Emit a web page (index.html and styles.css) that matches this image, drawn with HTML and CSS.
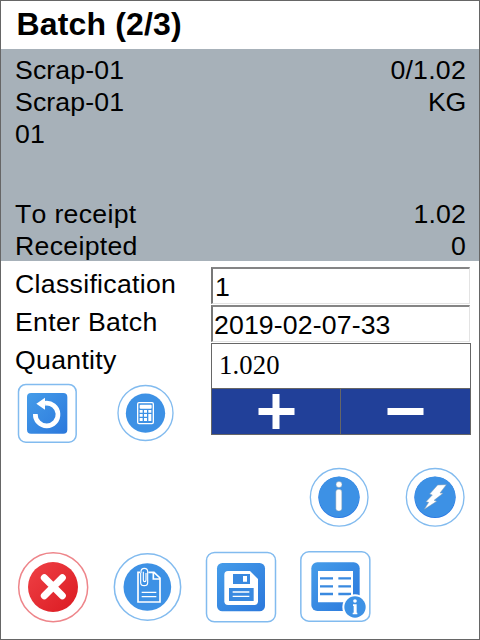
FILE: index.html
```html
<!DOCTYPE html>
<html lang="en">
<head>
<meta charset="utf-8">
<title>Batch</title>
<link rel="stylesheet" href="styles.css">
</head>
<body>
<main class="screen">
  <h1 class="title">Batch (2/3)</h1>
  <section class="summary">
    <div class="row"><span>Scrap-01</span><span class="ratio">0/1.02</span></div>
    <div class="row"><span>Scrap-01</span><span class="unit">KG</span></div>
    <div class="row"><span>01</span></div>
    <div class="row totals"><span class="wide">To receipt</span><span>1.02</span></div>
    <div class="row"><span class="wide">Receipted</span><span>0</span></div>
  </section>
  <section class="form">
    <div class="left">
      <div class="label wide">Classification</div>
      <div class="label wide">Enter Batch</div>
      <div class="label wide last">Quantity</div>
      <div class="tools">
        <svg class="undo" width="61" height="61" viewBox="21 24 183 183">
          <defs><linearGradient id="blue" x1="0" y1="0" x2="1" y2="1"><stop offset="0" stop-color="#459ce9"/><stop offset="1" stop-color="#2b78dc"/></linearGradient>
          <linearGradient id="red" x1="0" y1="0" x2="1" y2="1"><stop offset="0" stop-color="#ef4146"/><stop offset="1" stop-color="#db1a21"/></linearGradient></defs>
          <rect x="25.5" y="28.5" width="173" height="173" rx="22" fill="#fff" stroke="#82bbef" stroke-width="4.5"/>
          <rect x="51" y="54" width="121" height="122" rx="12" fill="url(#blue)"/>
          <path d="M76 117A34 34 0 1 0 105 85" fill="none" stroke="#fff" stroke-width="14"/>
          <path d="M79 86L105 68V104Z" fill="#fff"/>
        </svg>
        <svg class="calc" width="58" height="58" viewBox="21 27 174 174">
          <circle cx="106.5" cy="114" r="82.5" fill="#fff" stroke="#82bbef" stroke-width="4"/>
          <circle cx="106.5" cy="114.5" r="59" fill="#3d91e5"/>
          <rect x="83" y="83" width="47" height="63" rx="4" fill="none" stroke="#fff" stroke-width="4"/>
          <rect x="89" y="89" width="36" height="12" rx="3" fill="#fff"/>
          <path d="M89 105h9v8h-9zM102 105h9v8h-9zM115 105h9v8h-9zM89 117h9v8h-9zM102 117h9v8h-9zM115 117h9v21h-9zM89 129h9v9h-9zM102 129h9v9h-9z" fill="#fff"/>
        </svg>
      </div>
    </div>
    <div class="fields">
      <div class="field first">1</div>
      <div class="field">2019-02-07-33</div>
      <div class="stepper">
        <div class="amount">1.020</div>
        <div class="steps">
          <div class="step"><svg width="37" height="35" viewBox="0 0 37 35"><path d="M0.5 14h14V0h7v14h15v7h-15v14h-7V21h-14z" fill="#fff"/></svg></div>
          <div class="step"><svg width="37" height="35" viewBox="0 0 37 35"><path d="M0.5 14h36v7h-36z" fill="#fff"/></svg></div>
        </div>
      </div>
    </div>
  </section>
  <section class="extras">
    <svg width="61" height="61" viewBox="27 21 183 183">
      <circle cx="117.5" cy="112" r="86.5" fill="#fff" stroke="#82bbef" stroke-width="4"/>
      <circle cx="117" cy="112" r="62" fill="#2878e4"/><circle cx="117" cy="110.5" r="61" fill="#3d91e5"/>
      <g fill="#fff" stroke="#829cb3" stroke-width="1.5"><circle cx="117" cy="73.5" r="9"/><rect x="107.5" y="88" width="18" height="65" rx="8"/></g>
    </svg>
    <svg width="61" height="61" viewBox="315 21 183 183">
      <circle cx="405.5" cy="112" r="86.5" fill="#fff" stroke="#82bbef" stroke-width="4"/>
      <circle cx="405" cy="112" r="62" fill="#2878e4"/><circle cx="405" cy="110.5" r="61" fill="#3d91e5"/>
      <path d="M413 75L439 74L420 99L429 100L402 121L410 124L373 148L386 127L378 125L397 105L389 102Z" fill="#fff" stroke="#829cb3" stroke-width="1.5"/>
    </svg>
  </section>
  <section class="actions">
    <svg width="72" height="72" viewBox="21 18 216 216">
      <circle cx="129.5" cy="126.5" r="103.5" fill="#fff" stroke="#ee858a" stroke-width="4.5"/>
      <circle cx="129" cy="126" r="75" fill="url(#red)"/>
      <path d="M103 98L157 152M157 98L103 152" stroke="#fff" stroke-width="21" stroke-linecap="round"/>
    </svg>
    <svg class="docs" width="70" height="70" viewBox="24 21 210 210">
      <circle cx="127.5" cy="126" r="99.5" fill="#fff" stroke="#82bbef" stroke-width="4.5"/>
      <circle cx="127" cy="126" r="71.5" fill="#3d91e5"/>
      <path d="M105 82H99V171H165V99L147 82H130M145 83V102H164" fill="none" stroke="#fff" stroke-width="5"/>
      <path d="M110 142H154M110 155H154" stroke="#fff" stroke-width="4"/>
      <path d="M107 84V113Q107 122 117.5 122Q128 122 128 113V80Q128 70 118 70Q108 70 108 80V84M123 84V105Q123 110 119 110Q115 110 115 105V80" fill="none" stroke="#fff" stroke-width="3.5"/>
    </svg>
    <svg class="save" width="72" height="72" viewBox="15 18 216 216">
      <rect x="19.5" y="22.5" width="207" height="208" rx="24" fill="#fff" stroke="#82bbef" stroke-width="4.5"/>
      <rect x="51" y="54" width="144" height="145" rx="16" fill="url(#blue)"/>
      <path d="M84 78H150L174 102V169Q174 180 163 180H84Q73 180 73 169V89Q73 78 84 78Z" fill="#fff"/>
      <path d="M99 87H150V117H99ZM87 129H161V168H87Z" fill="#3989e0"/>
      <path d="M129 93H141V110H129ZM98 139H148V143H98ZM98 152H148V156H98Z" fill="#fff"/>
    </svg>
    <svg class="list" width="73" height="73" viewBox="12 15 219 219">
      <rect x="17.5" y="20.5" width="207" height="208" rx="24" fill="#fff" stroke="#82bbef" stroke-width="4.5"/>
      <rect x="49" y="52" width="145" height="146" rx="18" fill="url(#blue)"/>
      <path d="M69 78H174V172H69Z" fill="#fff"/>
      <path d="M75 100H114M75 124H114M75 147H114M130 100H168M130 124H168M130 147H168" stroke="#3989e0" stroke-width="7"/>
      <circle cx="180" cy="186" r="38" fill="#fff"/><circle cx="180" cy="186" r="32" fill="#3d91e5"/>
      <circle cx="180" cy="168" r="5.5" fill="#fff"/><path d="M174 178H185V203H187V208H173V203H176V183H174Z" fill="#fff"/>
    </svg>
  </section>
</main>
</body>
</html>
```
FILE: styles.css
```css
* { box-sizing: border-box; }
body { margin: 0; background: #fff; }
svg { display: block; flex: none; }
.screen {
  width: 480px;
  height: 640px;
  border: 1px solid #666;
  overflow: hidden;
  background: #fff;
  color: #000;
  font: 26.67px/32px "Liberation Sans", Arial, sans-serif;
  font-kerning: none;
  letter-spacing: 0.13px;
  white-space: nowrap;
}
.title {
  margin: 0;
  height: 48px;
  padding: 5px 0 0 15.5px;
  font-size: 32px;
  line-height: 36px;
  font-weight: bold;
  letter-spacing: 0.15px;
}
.summary {
  height: 212px;
  padding: 5px 13px 0 14px;
  background: #a7b1b9;
}
.row { display: flex; justify-content: space-between; height: 32px; }
.totals { margin-top: 48px; }
.wide { letter-spacing: 0.3px; }
.ratio { letter-spacing: 0.25px; }
.unit { letter-spacing: -0.3px; }
.form { display: flex; height: 206px; }
.left { width: 210px; padding: 7px 0 0 14px; }
.label { height: 38px; }
.label.last { height: 40px; }
.tools { display: flex; align-items: flex-start; padding-left: 2px; }
.undo { margin-top: -1px; }
.calc { margin-left: 39px; }
.fields { width: 260px; padding-top: 6px; }
.field {
  width: 259px;
  height: 37px;
  margin-bottom: 1px;
  padding-left: 1px;
  border: 2px solid;
  border-color: #858585 #e3e3e3 #e3e3e3 #777;
  border-right-width: 1px;
  border-bottom-width: 1px;
  line-height: 36px;
}
.field.first { padding-left: 2px; }
.stepper { height: 92px; border: 1px solid #666; }
.amount {
  height: 44px;
  padding: 5px 0 0 7px;
  font-family: "Liberation Serif", "Times New Roman", serif;
}
.steps { display: flex; height: 46px; border-top: 1px solid #666; background: #214099; }
.step { flex: none; width: 128px; padding: 5px 0 0 46px; }
.step + .step { width: 130px; border-left: 1px solid #666; }
.extras { display: flex; gap: 35px; height: 84px; padding-left: 308px; }
.actions { display: flex; align-items: flex-start; padding-left: 16px; }
.docs { margin: 1px 0 0 24px; }
.save { margin-left: 22px; }
.list { margin: -1px 0 0 22px; }
```
